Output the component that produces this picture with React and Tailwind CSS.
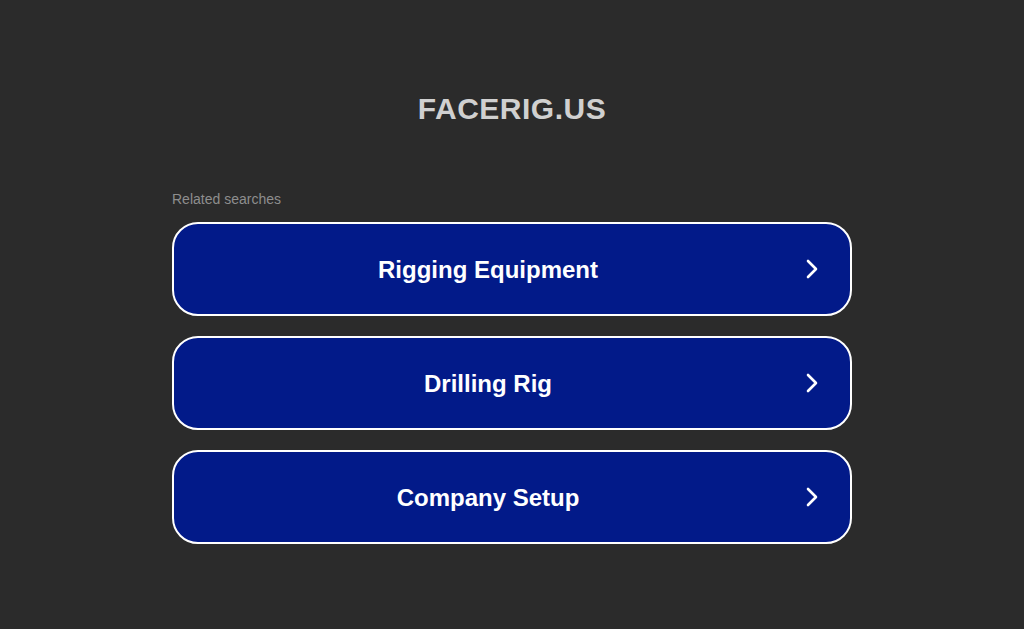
import React from "react";

const items = ["Rigging Equipment", "Drilling Rig", "Company Setup"];

function Chevron() {
  return (
    <svg width="16" height="22" viewBox="0 0 16 22" fill="none" stroke="white" strokeWidth="2.6" strokeLinecap="round" strokeLinejoin="round">
      <path d="M4 3 L12 11 L4 19" />
    </svg>
  );
}

export default function App() {
  return (
    <div className="min-h-[629px] w-full bg-[#2b2b2b] flex flex-col items-center" style={{ fontFamily: '"Liberation Sans", Arial, sans-serif' }}>
      <div className="pt-[91px] h-[36px] box-content text-[30px] leading-[36px] font-bold text-[#d0d0d0] tracking-[0.5px]">FACERIG.US</div>
      <div className="w-[680px] mt-[62px]">
        <div className="text-[14px] leading-[20px] text-[#8e8e8e]">Related searches</div>
        <div className="mt-[13px] flex flex-col gap-[20px]">
          {items.map((t) => (
            <div key={t} className="h-[94px] rounded-[26px] border-2 border-white bg-[#021a89] flex items-center pl-0 pr-[30px]">
              <div className="flex-1 mr-[2px] pt-[2px] text-center text-white font-bold text-[24px] leading-[28px]">{t}</div>
              <Chevron />
            </div>
          ))}
        </div>
      </div>
    </div>
  );
}
